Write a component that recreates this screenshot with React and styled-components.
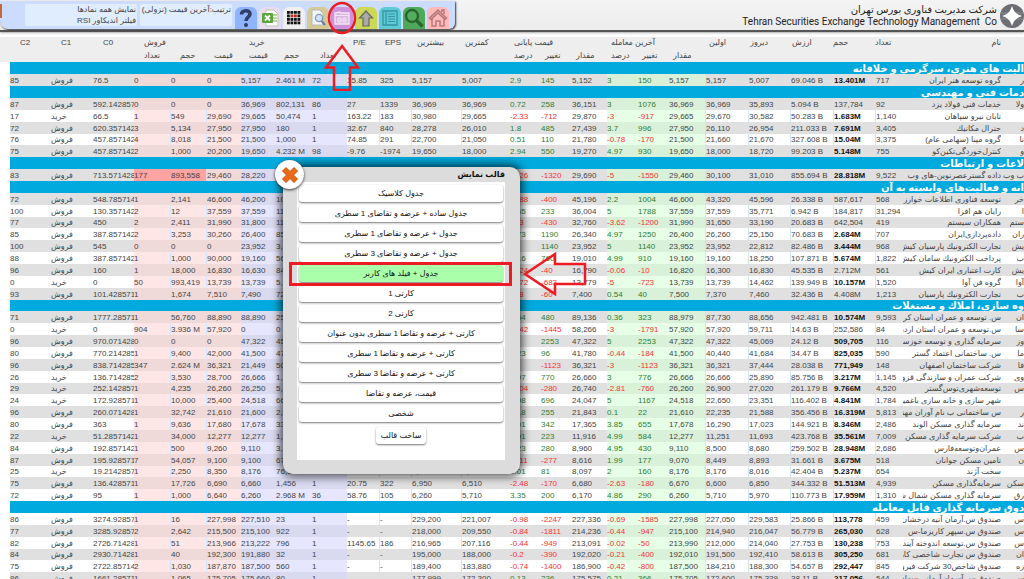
import React, { useState } from "react";
import styled, { createGlobalStyle } from "styled-components";

// c2 | side | c0 | sell count, volume, price | buy price, volume, count | p/e | eps | high | low |
// final %, change, value | last %, change, value | first | yesterday | value | volume (* = bold) | count | name | symbol
const GROUPS = [
  {
    title: "الیت هاي هنري، سرگرمي و خلاقانه",
    rows: `85|s|76.5|0|0|0|5,157|2.461 M|72|15.85|325|5,157|5,007|2.9|145|5,152|3|150|5,157|5,157|5,007|69.046 B|*13.401M|717|گروه توسعه هنر ایران|ر`,
  },
  {
    title: "دمات فني و مهندسي",
    rows: `87|s|592.14285714|0|0|0|36,969|802,131|86|27|1339|36,969|36,969|0.72|258|36,151|3|1076|36,969|36,969|35,893|5.094 B|137,784|92|خدمات فنی فولاد یزد|ولا
17|b|66.5|1|549|29,690|29,665|50,474|1|163.22|183|30,980|29,665|-2.33|-712|29,870|-3|-917|29,665|29,670|30,582|50.283 B|*1.683M|1,140|تابان نیرو سپاهان|
72|s|620.35714286|3|5,134|27,950|27,950|180|1|32.67|840|28,278|26,010|1.8|485|27,439|3.7|996|27,950|26,110|26,954|211.033 B|*7.691M|3,405|جنرال مکانیك|د
76|s|457.85714286|4|8,018|21,500|21,500|1,000|1|74.85|291|22,700|21,050|0.51|110|21,780|-0.78|-170|21,500|21,660|21,670|327.608 B|*15.04M|3,375|گروه مپنا (سهامی عام)|نا
75|s|457.85714286|2|1,000|20,200|19,650|4.232 M|98|-9.76|-1974|19,650|18,000|2.94|550|19,270|4.97|930|19,650|18,000|18,720|99.203 B|*5.148M|755|کنترل‌خوردگی‌تکین‌کو|و`,
  },
  {
    title: "لاعات و ارتباطات",
    rows: `83|s|713.57142857|!177|!893,558|29,460|28,220|2,500|1|31.40|938|30,400|28,220|-4.26|-1320|29,690|-5|-1550|29,460|30,100|31,010|855.694 B|*28.818M|9,522|داده گسترعصرنوین-های وب|ب وب`,
  },
  {
    title: "انه و فعالیت‌هاي وابسته به آن",
    rows: `72|s|548.78571429|1|2,141|46,600|46,200|100|1|22.10|2045|46,600|43,320|-0.88|-400|45,196|2.2|1004|46,600|43,320|45,596|26.338 B|587,617|568|توسعه فناوری اطلاعات خوارزمی|خر
100|s|130.35714286|2|12|37,559|37,559|11,200|4|18.30|1967|37,559|37,559|0.65|233|36,004|5|1788|37,559|37,559|35,771|6.942 B|184,817|31,294|رایان هم افزا|ا
77|s|450|2|2,411|31,990|31,800|110|1|16.20|2022|33,400|31,600|-1.3|-430|32,760|-3.62|-1200|31,990|31,650|33,190|20.683 B|642,504|419|همکاران سیستم|ستم
85|s|387.85714286|2|3,253|30,260|26,400|850|1|19.66|1340|26,400|25,700|4.73|1190|26,340|4.97|1250|26,400|26,260|25,150|70.683 B|*2.684M|707|داده‌پردازی‌ایران|ران
100|s|545|0|0|0|23,952|3,400|12|14.89|1608|23,952|23,952|5|1140|23,952|5|1140|23,952|23,952|22,812|82.486 B|*3.444M|968|تجارت الکترونیك پارسیان کیش|یش
88|s|387.85714286|1|1,000|90,000|19,160|560|1|17.51|1085|19,160|18,300|4.16|760|19,010|4.99|910|19,160|19,160|18,250|107.871 B|*5.674M|1,822|پرداخت الکترونیك سامان کیش|ب
96|s|160|1|18,000|16,830|16,630|840|1|22.73|738|17,050|16,300|-0.24|-40|16,790|-0.06|-10|16,820|16,300|16,830|45.535 B|2.712M|561|کارت اعتباری ایران کیش|یش
0|b|0|50|993,419|13,739|13,739|5,000|1|33.60|410|13,739|13,739|-4.72|-683|13,779|-5|-723|13,739|13,739|14,462|139.949 B|*10.157M|1,520|گروه فن آوا|آوا
93|s|101.42857143|1|1,674|7,510|7,490|720|1|11.80|627|7,570|7,300|-0.8|-60|7,400|0.54|40|7,500|7,370|7,460|32.436 B|4.408M|1,213|تجارت الکترونیك پارسیان|ب`,
  },
  {
    title: "وه سازي، املاك و مستغلات",
    rows: `71|s|1777.2857143|1|56,760|88,890|88,890|250|1|40.11|2222|89,900|87,730|0.54|480|89,136|0.36|323|88,979|87,730|88,656|942.481 B|*10.574M|9,593|س. توسعه و عمران استان کرمان|ان
0|b|0|904|3.936 M|57,920|0|0|0|28.31|2058|57,920|57,920|-2.42|-1445|58,266|-3|-1791|57,920|57,920|59,711|14.63 B|252,586|84|س.توسعه و عمران استان اردبیل|سا
96|s|970.07142857|0|0|0|47,322|45,100|9|25.50|1855|47,322|47,322|5|2253|47,322|5|2253|47,322|47,322|45,069|24.12 B|*509,705|116|سرمایه گذاری و توسعه خوزستان|وز
80|s|770.21428571|1|9,400|42,000|41,500|470|1|36.90|1132|42,500|40,440|0.23|96|41,780|-0.44|-184|41,500|40,440|41,684|34.47 B|*825,035|590|س. ساختمانی اعتماد گستر|ما
96|s|838.71428571|347|2.624 M|36,321|21,449|500|1|41.20|881|36,321|36,321|-3|-1123|36,321|-3|-1123|36,321|36,321|37,444|28.038 B|*771,949|148|شرکت ساختمان اصفهان|فا
26|b|136.71428571|2|3,530|28,700|26,666|1,200|1|19.20|1389|26,666|26,000|2.97|770|26,660|3|776|26,666|26,666|25,890|85.756 B|*3.217M|1,145|شرکت عمران و سازندگی قزوین|وی
29|b|252.14285714|1|4,235|26,260|26,250|5,000|1|30.10|888|27,100|26,250|-1.04|-280|26,740|-2.81|-760|26,260|26,900|27,020|261.179 B|*9.766M|4,520|توسعه‌شهری‌توس‌گستر|س
24|b|172.92857143|1|10,000|25,400|24,518|660|1|28.00|859|24,518|22,650|2.98|696|24,047|5|1167|24,518|22,650|23,351|116.402 B|*4.841M|1,784|شهر سازی و خانه سازی باغمیشه|
96|s|260.07142857|1|32,742|21,610|21,600|2,000|1|24.31|899|22,400|21,500|1.18|255|21,843|0.1|22|21,610|22,235|21,588|356.456 B|*16.319M|5,813|س ساختمانی ب نام آوران مهندسی|ر
80|s|363|1|9,636|17,680|17,678|330|1|19.54|889|17,678|16,290|2.01|342|17,365|3.85|655|17,678|16,290|17,023|144.921 B|*8.346M|2,486|سرمایه گذاری مسکن الوند|ند
22|b|51.28571428|1|34,000|12,277|12,277|1,500|1|15.31|778|12,277|11,251|1.91|223|11,916|4.99|584|12,277|11,251|11,693|423.768 B|*35.561M|7,009|شرکت سرمایه گذاری مسکن زاینده|ب
84|s|192.85714286|1|500|9,260|9,110|3,000|1|12.80|700|9,110|8,500|3.23|280|8,960|4.95|430|9,110|8,500|8,680|259.502 B|*28.948M|2,686|عمران‌وتوسعه‌فارس|س
87|s|195.92857143|7|54,057|9,100|9,100|670|1|17.10|504|9,100|8,449|-3.11|-277|8,616|1.99|177|9,070|8,449|8,893|31.661 B|*3.675M|518|تامین مسکن جوانان|ن
25|b|19.21428571|1|2,250|8,350|8,176|76,100|3|21.30|380|8,176|8,016|1.01|81|8,097|2|160|8,176|8,176|8,016|42.404 B|*5.237M|654|سخت آژند|
75|s|136.42857143|1|17,726|6,690|6,660|1,456|1|20.75|322|6,950|6,510|-2.48|-170|6,680|-2.63|-180|6,670|6,600|6,850|344.332 B|*51.513M|4,939|سرمایه‌گذاری مسکن|سکن
72|s|95|1|1,000|6,640|6,260|2.968 M|36|58.76|105|6,260|5,710|3.35|200|6,170|4.86|290|6,260|5,710|5,970|110.773 B|*17.959M|1,310|سرمایه گذاری مسکن شمال شرق|رق`,
  },
  {
    title: "دوق سرمایه گذاري قابل معامله",
    plainFirst: true,
    rows: `86|s|3274.9285714|1|16|227,998|227,510|23|1|-|-|229,200|221,007|-0.98|-2247|227,336|-0.69|-1585|227,998|227,050|229,583|25.866 B|*113,778|459|صندوق س.آرمان آتیه درخشان|س
77|s|3285.9285714|2|2,642|215,500|215,100|922|1|-|-|218,000|209,550|-0.84|-1811|214,236|-0.44|-947|215,100|214,940|216,047|56.779 B|*265,030|628|صندوق س.سپهر کاریزما-س|س
82|s|2726.7142857|1|51|213,966|213,222|796|1|1145.65|186|216,965|207,116|-0.44|-949|213,091|-0.02|-50|213,990|212,000|214,040|27.753 B|*130,238|753|صندوق س.توسعه اندوخته آینده|س
84|s|2930.7142857|1|40|192,300|191,880|32|1|-|-|195,000|188,000|-0.2|-390|192,020|-0.21|-400|192,010|191,500|192,410|58.613 B|*305,250|681|صندوق س تجارت شاخصی کاردان|ان
75|s|2722.8571429|2|1,030|187,870|187,500|560|1|-|-|189,400|183,880|-0.74|-1400|186,900|-0.42|-800|187,500|184,210|188,300|54.657 B|*292,447|845|صندوق شاخص30 شرکت فیروزه|زه
86|s|1661.2857143|1|1,065|175,705|175,660|80|1|-|-|177,999|172,300|0.13|236|175,575|0.21|366|175,705|172,600|175,339|38.11 B|*217,056|544|صندوق س.آسمان‌آرمانی سهام|س`,
  },
];

const WIDTHS = [
  41, 42, 41, 36, 36, 35, 35, 36, 35, 32, 32, 50, 49, 31, 31, 35, 31, 31, 36,
  43, 42, 43, 42, 28, 98, 23,
];

const HEAD_TOP = [
  ["C2", 10], ["C1", 10], ["C0", 10], ["فروش", 10, 3], ["خرید", 8, 3],
  ["P/E", 6], ["EPS", 6], ["بیشترین", 6], ["کمترین", 4],
  ["قیمت پایانی", 4, 3], ["آخرین معامله", 4, 3], ["اولین", 4], ["دیروز", 2],
  ["ارزش", 2], ["حجم", 0], ["تعداد", 0],
];

const HEAD_BOTTOM = [
  ["", 0], ["", 0], ["", 0], ["تعداد", 10], ["حجم", 10], ["قیمت", 8],
  ["قیمت", 8], ["حجم", 8], ["تعداد", 8], ["", 0], ["", 0], ["", 0], ["", 0],
  ["درصد", 4], ["تغییر", 4], ["مقدار", 4], ["درصد", 4], ["تغییر", 4],
  ["مقدار", 4],
];

const TEMPLATES = [
  "جدول کلاسیک",
  "جدول ساده + عرضه و تقاضای 1 سطری",
  "جدول + عرضه و تقاضای 1 سطری",
  "جدول + عرضه و تقاضای 3 سطری",
  "جدول + فیلد های کاربر",
  "کارتی 1",
  "کارتی 2",
  "کارتی + عرضه و تقاضا 1 سطری بدون عنوان",
  "کارتی + عرضه و تقاضا 1 سطری",
  "کارتی + عرضه و تقاضا 3 سطری",
  "قیمت، عرضه و تقاضا",
  "شخصی",
];

// columns with a thin rule on their left side
const RULED = [4, 5, 10, 11, 12, 19, 20, 21, 22, 23];

const tintOf = (i) => {
  if (i >= 3 && i <= 5) return "sell";
  if (i >= 6 && i <= 8) return "buy";
  if (i >= 16 && i <= 18) return "last";
  return "none";
};

const toneOf = (i, value) => {
  if (![13, 14, 16, 17].includes(i)) return undefined;
  return value.startsWith("-") ? "down" : "up";
};

const QuoteCell = ({ value, index, striped }) => {
  const hot = value.startsWith("!");
  const bold = value.startsWith("*");
  let text = value.replace(/^[!*]/, "");
  if (index === 1) text = text === "s" ? "فروش" : "خرید";
  return (
    <Cell
      $tint={hot ? "hot" : tintOf(index)}
      $tone={toneOf(index, text)}
      $bold={bold}
      $striped={striped}
      $ruled={RULED.includes(index)}
      $rtl={index >= 24}
    >
      {text}
    </Cell>
  );
};

const QuoteTable = () => (
  <Table>
    <colgroup>
      {WIDTHS.map((w, i) => (
        <col key={i} style={{ width: w }} />
      ))}
    </colgroup>
    <thead>
      <HeadRow>
        {HEAD_TOP.map(([label, pad, span], i) => (
          <Head key={i} $pad={pad} colSpan={span || 1}>
            {label}
          </Head>
        ))}
        <Head $rtl>نام</Head>
        <Head />
      </HeadRow>
      <HeadRow>
        {HEAD_BOTTOM.map(([label, pad], i) => (
          <Head key={i} $pad={pad}>
            {label}
          </Head>
        ))}
        <Head colSpan={7} />
      </HeadRow>
    </thead>
    <tbody>
      {GROUPS.map((group) => (
        <React.Fragment key={group.title}>
          <Row>
            <Band colSpan={WIDTHS.length}>{group.title}</Band>
          </Row>
          {group.rows.split("\n").map((line, n) => (
            <Row key={line}>
              {line.split("|").map((value, i) => (
                <QuoteCell
                  key={i}
                  value={value}
                  index={i}
                  striped={n % 2 === (group.plainFirst ? 1 : 0)}
                />
              ))}
            </Row>
          ))}
        </React.Fragment>
      ))}
    </tbody>
  </Table>
);

const HelpIcon = () => (
  <svg width="18" height="20" viewBox="0 0 18 20" fill="none" stroke="#2f3f66">
    <path d="M4.5 6.5C4.5 1.5 13 1.5 13 6c0 3.4-4 3-4 7" strokeWidth="3.6" />
    <circle cx="9" cy="17" r="1.3" fill="#2f3f66" strokeWidth="1.4" />
  </svg>
);

const ExcelIcon = () => (
  <svg width="18" height="18" viewBox="0 0 18 18">
    <path d="M5 1h8l4 4v12H5z" fill="#fff" stroke="#b9c4b4" />
    <path d="M12 6h4M12 9h4M12 12h4" stroke="#9ccb86" strokeWidth="1.5" />
    <rect x="1" y="4" width="11" height="10" rx="1" fill="#5ba63c" />
    <path d="M4 6.5l5 5M9 6.5l-5 5" stroke="#fff" strokeWidth="1.8" />
  </svg>
);

const GridIcon = () => (
  <svg width="14" height="14" viewBox="0 0 14 14">
    {[0, 1, 2, 3].map((y) =>
      [0, 1, 2, 3].map((x) => (
        <rect
          key={`${x}${y}`}
          x={x * 3.5}
          y={y * 3.5}
          width="2.8"
          height="2.8"
          fill={(x === 1 || x === 2) && y === 1 ? "#b3261a" : "#111"}
        />
      ))
    )}
  </svg>
);

const PreviewIcon = () => (
  <svg width="18" height="18" viewBox="0 0 18 18">
    <path d="M3 1h8l3 3v12H3z" fill="#f3f5f8" stroke="#b4b9be" />
    <circle cx="10" cy="9" r="3.6" fill="#cfe4f7" stroke="#7f9bb8" strokeWidth="1.3" />
    <path d="M12.5 12l3.5 4" stroke="#6d7f99" strokeWidth="2" />
  </svg>
);

const LayoutIcon = () => (
  <svg width="16" height="16" viewBox="0 0 16 16" fill="none" stroke="#f4e4f6">
    <path d="M1 14V3l5-1 1 1h8v11z" fill="#dcb6e2" strokeWidth="1.4" />
    <path d="M1 5.5h14M4 8v4M7 8v4M9 8v4M12 8v4M4 8h3M9 8h3M4 10h3M9 10h3M4 12h3M9 12h3" />
  </svg>
);

const UpIcon = () => (
  <svg width="16" height="17" viewBox="0 0 16 17">
    <path d="M8 1l6.5 7H11v8H5V8H1.5z" fill="#a9a9a5" stroke="#67675c" strokeWidth="1.2" />
  </svg>
);

const ListIcon = () => (
  <svg width="18" height="18" viewBox="0 0 18 18" fill="none" stroke="#3794a0">
    <path d="M2 2h14v14H2zM5 2v14" strokeWidth="1.3" />
    <path d="M7 5h7M7 7.5h7M7 10h7M7 12.5h7" />
  </svg>
);

const SearchIcon = () => (
  <svg width="20" height="20" viewBox="0 0 20 20" fill="none" stroke="#28652f">
    <circle cx="8" cy="8" r="6" fill="#55ad5e" strokeWidth="2.4" />
    <path d="M12.5 12.5l6 6" strokeWidth="3.4" />
  </svg>
);

const HomeIcon = () => (
  <svg width="20" height="20" viewBox="0 0 20 20" fill="none" stroke="#b5797a" strokeWidth="1.5">
    <path d="M4 10v8h4v-5h4v5h4v-8" />
    <path d="M1.5 10L10 2l8.5 8-1.5 1.5-7-6.5-7 6.5z" fill="#e99fa0" />
    <path d="M14 4V2h2v4" />
  </svg>
);

const TOOLS = [
  { label: "راهنما", color: "#90b4fc", icon: <HelpIcon /> },
  { label: "اکسل", color: "#eadcf0", icon: <ExcelIcon /> },
  { label: "نقشه بازار", color: "#efefef", icon: <GridIcon /> },
  { label: "فیلتر", color: "#d6ca94", icon: <PreviewIcon /> },
  { label: "قالب نمایش", color: "#cd92da", icon: <LayoutIcon />, marked: true },
  { label: "مرتب سازی", color: "#ccd957", icon: <UpIcon /> },
  { label: "فهرست", color: "#5dcbd6", icon: <ListIcon /> },
  { label: "جستجو", color: "#50a958", icon: <SearchIcon /> },
  { label: "خانه", color: "#ffb9b9", icon: <HomeIcon /> },
];

const Toolbar = () => (
  <ToolPanel>
    <EdgeTab />
    <InfoBox $width={112}>
      نمایش همه نمادها
      <br />
      فیلتر اندیکاور RSI
    </InfoBox>
    <InfoBox $width={92}>ترتیب:آخرین قیمت (نزولی)</InfoBox>
    <Tools>
      {TOOLS.map((tool) => (
        <ToolButton key={tool.label} aria-label={tool.label} $color={tool.color}>
          {tool.icon}
          {tool.marked && (
            <UpMark width="36" height="90" viewBox="0 0 36 90">
              <ellipse cx="18" cy="17" rx="13" ry="15" />
              <path d="M18 45L34 66.5H26V89H10V66.5H2z" />
            </UpMark>
          )}
        </ToolButton>
      ))}
    </Tools>
  </ToolPanel>
);

const Logo = () => (
  <svg width="24" height="24" viewBox="0 0 24 24">
    <circle cx="12" cy="12" r="12" fill="#6d6e74" />
    <path d="M0 9h24M0 15h24" stroke="#8c8d93" />
    <path d="M12 2c2 6 4 8 10 10-6 2-8 4-10 10-2-6-4-8-10-10C8 10 10 8 12 2z" fill="#fff" />
  </svg>
);

const TemplateDialog = ({ onClose }) => {
  const [active, setActive] = useState(4);

  return (
    <Dialog role="dialog" aria-labelledby="template-title">
      <CloseButton aria-label="بستن" onClick={onClose}>
        <svg width="18" height="18" viewBox="0 0 18 18">
          <path
            d="M5 1.5l4 4 4-4L16.5 5l-4 4 4 4-3.5 3.5-4-4-4 4L1.5 13l4-4-4-4z"
            fill="#ea6a16"
            stroke="#c4500c"
            strokeLinejoin="round"
          />
        </svg>
      </CloseButton>
      <DialogTitle id="template-title">قالب نمایش</DialogTitle>
      <DialogBody>
        {TEMPLATES.map((name, i) => (
          <Choice key={name} $active={i === active} onClick={() => setActive(i)}>
            {name}
          </Choice>
        ))}
        <BuildButton>ساخت قالب</BuildButton>
      </DialogBody>
      <RowMark />
      <LeftMark width="64" height="44" viewBox="0 0 64 44">
        <path d="M2 22L32 2v10h30v20H32v10z" />
      </LeftMark>
    </Dialog>
  );
};

const App = () => {
  const [open, setOpen] = useState(true);

  return (
    <Page>
      <GlobalStyle />
      <Header>
        <Toolbar />
        <Brand>
          <BrandText>
            <span dir="rtl">شرکت مدیریت فناوری بورس تهران</span>
            <span>Tehran Securities Exchange Technology Management&nbsp; Co</span>
          </BrandText>
          <Logo />
        </Brand>
      </Header>
      <Market>
        <QuoteTable />
      </Market>
      {open && <TemplateDialog onClose={() => setOpen(false)} />}
    </Page>
  );
};

export default App;

// Styled components

const GlobalStyle = createGlobalStyle`
  * {
    box-sizing: border-box;
  }

  body {
    margin: 0;
    background: #fff;
    color: #444;
    font-family: "Liberation Sans", "DejaVu Sans", sans-serif;
    font-size: 8px;
  }

  button {
    font-family: inherit;
    border: 0;
    padding: 0;
    cursor: pointer;
  }
`;

const Page = styled.div`
  position: relative;
  height: 100vh;
  overflow: hidden;
`;

const Header = styled.header`
  display: flex;
  justify-content: space-between;
  height: 32px;
  padding-top: 1px;
  background: linear-gradient(#f4f4f4, #ececec);
  border-bottom: 2px solid #555;
  box-shadow: 0 1px 2px #aaa;
`;

const ToolPanel = styled.div`
  position: relative;
  z-index: 2;
  display: flex;
  align-items: flex-start;
  gap: 3px;
  width: 455px;
  height: 28px;
  padding-top: 3px;
  background: #ccdcff;
  border-radius: 0 0 6px 8px;
  box-shadow: 1px 1px 2px #333;
`;

const EdgeTab = styled.div`
  flex-shrink: 0;
  width: 22px;
  height: 14px;
  border-left: 2px solid #c4683c;
`;

const InfoBox = styled.div`
  direction: rtl;
  flex-shrink: 0;
  width: ${(props) => props.$width}px;
  height: 22px;
  padding: 0 1px;
  background: #e0edff;
  border-radius: 2px;
  line-height: 11px;
  white-space: nowrap;
`;

const Tools = styled.div`
  display: flex;
  gap: 2px;
  padding-top: 3px;
`;

const ToolButton = styled.button`
  position: relative;
  display: flex;
  align-items: center;
  justify-content: center;
  width: 22px;
  height: 22px;
  background: ${(props) => props.$color};
  border-radius: 6px 6px 0 0;

  > svg {
    flex-shrink: 0;
  }
`;

const UpMark = styled.svg`
  position: absolute;
  top: -6px;
  left: -7px;
  z-index: 5;
  fill: none;
  stroke: #ed1c24;
  stroke-width: 2.5;
  pointer-events: none;
`;

const Brand = styled.div`
  display: flex;
  align-items: center;
  gap: 3px;
  color: #222;
`;

const BrandText = styled.div`
  display: flex;
  flex-direction: column;
  font-family: Roboto, "Liberation Sans", "DejaVu Sans", sans-serif;
  font-size: 10px;
  line-height: 12px;
  white-space: nowrap;
`;

const Market = styled.main`
  margin-top: 5px;
  padding-left: 10px;
`;

const Table = styled.table`
  width: 100%;
  table-layout: fixed;
  border-collapse: separate;
  border-spacing: 0;
`;

const HeadRow = styled.tr`
  height: 12px;
  background: #eee;

  &:last-child {
    height: 13px;
  }
`;

const Head = styled.th`
  padding: 0 0 0 ${(props) => props.$pad || 0}px;
  font-weight: normal;
  line-height: 12px;
  text-align: ${(props) => (props.$rtl ? "right" : "left")};
  white-space: nowrap;

  &:first-child {
    box-shadow: -10px 0 0 #eee;
  }
`;

// [plain row, striped row]
const TINTS = {
  none: ["#fff", "#e0e0e0"],
  sell: ["#ffe6e6", "#f0d9d9"],
  buy: ["#e6e6ff", "#d9d9f0"],
  last: ["#e6ffe6", "#d9f0d9"],
  hot: ["#ffa3a3", "#ffa3a3"],
};

const TONES = { up: "#2f7d32", down: "#fa3232" };

const Cell = styled.td`
  padding: 0;
  overflow: hidden;
  line-height: 11px;
  white-space: nowrap;
  direction: ${(props) => (props.$rtl ? "rtl" : "ltr")};
  color: ${(props) => TONES[props.$tone] || (props.$bold ? "#111" : "#444")};
  font-weight: ${(props) => (props.$bold ? "bold" : "normal")};
  background: ${(props) => TINTS[props.$tint][props.$striped ? 1 : 0]};
  border-left: ${(props) => (props.$ruled ? "1px solid" : "0")};
  border-left-color: ${(props) => (props.$striped ? "transparent" : "#d2e6fc")};
`;

const Row = styled.tr`
  height: 12px;

  &:nth-child(7n) {
    height: 11px;
  }
`;

const Band = styled.td`
  padding: 0;
  background: #00aade;
  color: #fff;
  direction: rtl;
  font-size: 10px;
  font-weight: bold;
  line-height: 11px;
  white-space: nowrap;
`;

const Dialog = styled.section`
  position: absolute;
  top: 167px;
  left: 283px;
  z-index: 3;
  width: 237px;
  padding: 0 15px 14px 14px;
  background: #dcdcdc;
  border-radius: 10px;
  box-shadow: 0 0 10px 2px rgba(0, 0, 0, 0.75);
`;

const DialogTitle = styled.h2`
  margin: 0;
  direction: rtl;
  color: #111;
  font-size: 8px;
  line-height: 15px;
`;

const DialogBody = styled.div`
  display: flex;
  flex-direction: column;
  align-items: center;
  gap: 3px;
  padding: 3px 2px 16px;
  background: #fff;
`;

const Choice = styled.button`
  direction: rtl;
  width: 100%;
  height: 17px;
  background: ${(props) => (props.$active ? "#aaffaa" : "#fff")};
  border-radius: 3px;
  box-shadow: 0 1px 2px #777;
  color: #111;
  font-size: 8px;
  line-height: 15px;
`;

const BuildButton = styled(Choice)`
  width: 50px;
  margin-top: 2px;
`;

const CloseButton = styled.button`
  position: absolute;
  top: -7px;
  left: -8px;
  display: flex;
  align-items: center;
  justify-content: center;
  width: 29px;
  height: 29px;
  background: #fff;
  border-radius: 50%;
  box-shadow: 0 1px 3px #333;
`;

const RowMark = styled.div`
  position: absolute;
  top: 95px;
  left: 6px;
  width: 223px;
  height: 24px;
  border: 3px solid #ed1c24;
  pointer-events: none;
`;

const LeftMark = styled.svg`
  position: absolute;
  top: 85px;
  left: 240px;
  fill: none;
  stroke: #ed1c24;
  stroke-width: 2.5;
  pointer-events: none;
`;
